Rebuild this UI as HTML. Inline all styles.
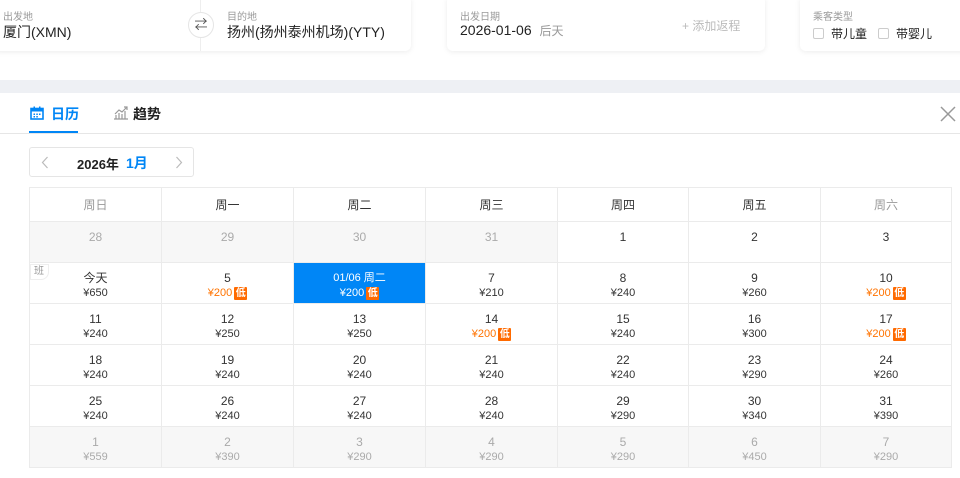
<!DOCTYPE html>
<html><head><meta charset="utf-8"><style>
*{margin:0;padding:0;box-sizing:border-box}
body{width:960px;height:478px;overflow:hidden;background:#fff;font-family:"Liberation Sans","Noto Sans CJK SC",sans-serif;color:#333;position:relative}
.card{position:absolute;top:-4px;height:55px;background:#fff;border-radius:6px;box-shadow:0 1px 6px rgba(0,0,0,.08)}
.lbl{position:absolute;font-size:10px;color:#999}
.val{position:absolute;font-size:14px;color:#222}
.band{position:absolute;left:0;top:80px;width:960px;height:13px;background:#eef0f4}
.grid{position:absolute;left:29px;top:187px;border-collapse:collapse;table-layout:fixed}
.grid td{border:1px solid #ebebeb;text-align:center;vertical-align:top;font-size:12px;height:41px;padding-top:7px;line-height:16px}
.grid tr.h td{height:34px;padding-top:9px;font-size:12px;color:#333}
.grid tr.h td.w{color:#999}
.p{font-size:11px;line-height:14px;height:14px;color:#333;display:flex;justify-content:center;align-items:center}
.o{color:#ff7300}
.lo{display:inline-block;background:#ff6a00;color:#fff;font-size:10px;font-weight:bold;line-height:13px;height:13px;width:13px;margin-left:2px;border-radius:1px;text-align:center;overflow:hidden}
.g{background:#f7f7f7}
.g,.g .p{color:#aaa}
.sel{background:#0086f6;color:#fff;font-size:11px!important}
.sel .p{color:#fff}
</style></head><body>
<div class="card" style="left:-10px;width:421px">
 <div class="lbl" style="left:13px;top:12px">出发地</div>
 <div class="val" style="left:13px;top:26px">厦门(XMN)</div>
 <div style="position:absolute;left:210px;top:4px;width:1px;height:51px;background:#eee"></div>
 <div style="position:absolute;left:198px;top:16px;width:26px;height:26px;border-radius:50%;background:#fff;border:1px solid #e5e5e5;font-size:13px;color:#555;text-align:center;line-height:24px">⇄</div>
 <div class="lbl" style="left:237px;top:12px">目的地</div>
 <div class="val" style="left:237px;top:26px">扬州(扬州泰州机场)(YTY)</div>
</div>
<div class="card" style="left:447px;width:318px">
 <div class="lbl" style="left:13px;top:12px">出发日期</div>
 <div class="val" style="left:13px;top:26px">2026-01-06 <span style="font-size:12px;color:#999;margin-left:4px">后天</span></div>
 <div style="position:absolute;left:235px;top:21px;font-size:12px;color:#bbb">+ 添加返程</div>
</div>
<div class="card" style="left:800px;width:180px">
 <div class="lbl" style="left:13px;top:12px">乘客类型</div>
 <div style="position:absolute;left:13px;top:29px;font-size:12px;color:#222"><span style="display:inline-block;width:11px;height:11px;border:1px solid #ccc;border-radius:2px;vertical-align:-1px;margin-right:7px"></span>带儿童<span style="display:inline-block;width:11px;height:11px;border:1px solid #ccc;border-radius:2px;vertical-align:-1px;margin:0 7px 0 11px"></span>带婴儿</div>
</div>
<div class="band"></div>
<svg style="position:absolute;left:30px;top:106px" width="14" height="14" viewBox="0 0 14 14"><rect x="1" y="2.5" width="12" height="10.5" fill="none" stroke="#0086f6" stroke-width="1.6"/><rect x="1" y="2.5" width="12" height="3" fill="#0086f6"/><rect x="3.5" y="0.5" width="1.5" height="3" fill="#0086f6"/><rect x="9" y="0.5" width="1.5" height="3" fill="#0086f6"/><g fill="#0086f6"><rect x="3.5" y="7.5" width="1.5" height="1.5"/><rect x="6.3" y="7.5" width="1.5" height="1.5"/><rect x="9" y="7.5" width="1.5" height="1.5"/><rect x="3.5" y="10" width="1.5" height="1.5"/><rect x="6.3" y="10" width="1.5" height="1.5"/></g></svg>
<div style="position:absolute;left:51px;top:104px;font-size:14px;font-weight:bold;color:#0086f6">日历</div>
<div style="position:absolute;left:29px;top:131px;width:49px;height:2px;background:#0086f6"></div>
<svg style="position:absolute;left:113px;top:106px" width="16" height="14" viewBox="0 0 16 14"><path d="M1 13h14M3 13V9M6 13V7M9 13V8M12 13V5M2 8l4-4 3 2 5-5M11 1h3v3" fill="none" stroke="#999" stroke-width="1.2"/></svg>
<div style="position:absolute;left:133px;top:104px;font-size:14px;font-weight:bold;color:#222">趋势</div>
<div style="position:absolute;left:0;top:133px;width:960px;height:1px;background:#e6e6e6"></div>
<svg style="position:absolute;left:939px;top:105px" width="18" height="18" viewBox="0 0 18 18"><path d="M2 2L16 16M16 2L2 16" stroke="#999" stroke-width="1.5"/></svg>
<div style="position:absolute;left:29px;top:147px;width:165px;height:30px;border:1px solid #e5e5e5;border-radius:3px">
 <svg style="position:absolute;left:11px;top:8px" width="8" height="13" viewBox="0 0 8 13"><path d="M6.5 1L1.5 6.5l5 5.5" fill="none" stroke="#bbb" stroke-width="1.2"/></svg>
 <span style="position:absolute;left:47px;top:6px;font-size:13px;font-weight:bold;color:#222">2026年</span>
 <span style="position:absolute;left:96px;top:5px;font-size:14px;font-weight:bold;color:#0086f6">1月</span>
 <svg style="position:absolute;left:145px;top:8px" width="8" height="13" viewBox="0 0 8 13"><path d="M1.5 1l5 5.5-5 5.5" fill="none" stroke="#bbb" stroke-width="1.2"/></svg>
</div>
<table class="grid">
<colgroup><col style="width:132px"><col style="width:132px"><col style="width:132px"><col style="width:132px"><col style="width:131px"><col style="width:132px"><col style="width:131px"></colgroup>
<tr class="h"><td class="w">周日</td><td>周一</td><td>周二</td><td>周三</td><td>周四</td><td>周五</td><td class="w">周六</td></tr>
<tr><td class="g">28</td><td class="g">29</td><td class="g">30</td><td class="g">31</td><td>1</td><td>2</td><td>3</td></tr>
<tr><td style="position:relative"><span style="position:absolute;left:0;top:1px;font-size:10px;color:#999;background:#fff;border:1px solid #eee;border-radius:0 0 8px 0;padding:0 4px 0 3px;line-height:14px">班</span>今天<div class="p">¥650</div></td><td>5<div class="p o">¥200<span class="lo">低</span></div></td><td class="sel">01/06 周二<div class="p">¥200<span class="lo">低</span></div></td><td>7<div class="p">¥210</div></td><td>8<div class="p">¥240</div></td><td>9<div class="p">¥260</div></td><td>10<div class="p o">¥200<span class="lo">低</span></div></td></tr>
<tr><td>11<div class="p">¥240</div></td><td>12<div class="p">¥250</div></td><td>13<div class="p">¥250</div></td><td>14<div class="p o">¥200<span class="lo">低</span></div></td><td>15<div class="p">¥240</div></td><td>16<div class="p">¥300</div></td><td>17<div class="p o">¥200<span class="lo">低</span></div></td></tr>
<tr><td>18<div class="p">¥240</div></td><td>19<div class="p">¥240</div></td><td>20<div class="p">¥240</div></td><td>21<div class="p">¥240</div></td><td>22<div class="p">¥240</div></td><td>23<div class="p">¥290</div></td><td>24<div class="p">¥260</div></td></tr>
<tr><td>25<div class="p">¥240</div></td><td>26<div class="p">¥240</div></td><td>27<div class="p">¥240</div></td><td>28<div class="p">¥240</div></td><td>29<div class="p">¥290</div></td><td>30<div class="p">¥340</div></td><td>31<div class="p">¥390</div></td></tr>
<tr><td class="g">1<div class="p">¥559</div></td><td class="g">2<div class="p">¥390</div></td><td class="g">3<div class="p">¥290</div></td><td class="g">4<div class="p">¥290</div></td><td class="g">5<div class="p">¥290</div></td><td class="g">6<div class="p">¥450</div></td><td class="g">7<div class="p">¥290</div></td></tr>
</table>
</body></html>
